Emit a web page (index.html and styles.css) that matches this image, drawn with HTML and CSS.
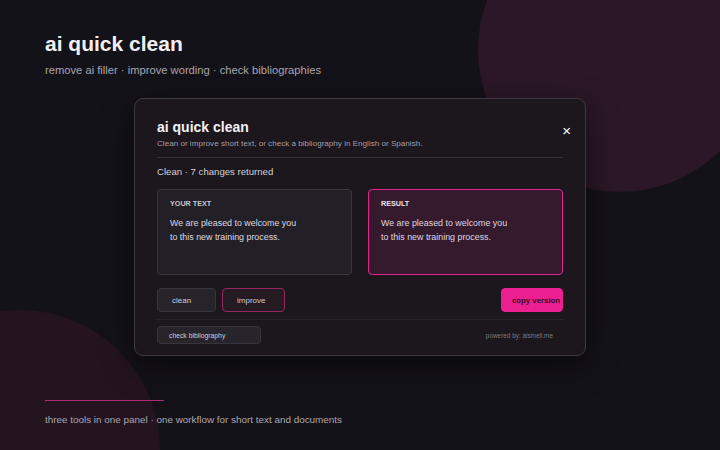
FILE: index.html
```html
<!DOCTYPE html>
<html lang="en">
    <head>
        <meta charset="UTF-8">
        <meta name="viewport" content="width=device-width, initial-scale=1.0">
        <title>ai quick clean</title>
        <link rel="stylesheet" href="styles.css">
    </head>

    <body>

        <!-- Фоновые круги -->

        <div class="backdrop">
            <div class="blob blob-top"></div>
            <div class="blob blob-bottom"></div>
        </div>

        <!-- Заголовок -->

        <header class="hero">
            <h1>ai quick clean</h1>
            <p>remove ai filler · improve wording · check bibliographies</p>
        </header>

        <!-- Панель -->

        <main class="panel">
            <div class="panel-head">
                <div>
                    <h2>ai quick clean</h2>
                    <p class="panel-sub">Clean or improve short text, or check a bibliography in English or Spanish.</p>
                </div>
                <span class="close">&times;</span>
            </div>

            <div class="status">Clean · 7 changes returned</div>

            <div class="boxes">
                <div class="box">
                    <span class="box-label">YOUR TEXT</span>
                    <p>We are pleased to welcome you<br>to this new training process.</p>
                </div>
                <div class="box box-result">
                    <span class="box-label">RESULT</span>
                    <p>We are pleased to welcome you<br>to this new training process.</p>
                </div>
            </div>

            <div class="actions">
                <button class="btn">clean</button>
                <button class="btn btn-active">improve</button>
                <button class="btn btn-copy">copy version</button>
            </div>

            <div class="panel-foot">
                <button class="btn btn-bib">check bibliography</button>
                <span class="powered">powered by: aismell.me</span>
            </div>
        </main>

        <!-- Подвал -->

        <footer class="foot">
            <div class="foot-line"></div>
            <p>three tools in one panel · one workflow for short text and documents</p>
        </footer>

    </body>
</html>
```

FILE: styles.css
```css
/* Общие */

html {
    overflow: hidden;
}

body {
    font-family: "Liberation Sans", Arial, sans-serif;
    margin: 0;
    width: 720px;
    height: 450px;
    overflow: hidden;
    position: relative;
    background: #141219;
    color: #f2f0f4;
}

.backdrop {
    position: absolute;
    top: 0;
    left: 0;
    right: 0;
    bottom: 0;
    overflow: hidden;
}

.blob {
    position: absolute;
    border-radius: 50%;
    background: #2b1727;
}

.blob-top {
    top: -92px;
    left: 478px;
    width: 284px;
    height: 284px;
}

.blob-bottom {
    top: 310px;
    left: -120px;
    width: 280px;
    height: 280px;
    background: #231420;
}

/* Заголовок */

.hero {
    position: relative;
    padding: 32px 45px 0;
}

.hero h1 {
    margin: 0;
    font-size: 21px;
    line-height: 24px;
    font-weight: bold;
}

.hero p {
    margin: 8px 0 0;
    font-size: 11.2px;
    color: #a9a5ae;
}

/* Панель */

.panel {
    position: relative;
    width: 406px;
    margin: 22px auto 0;
    padding: 19px 22px 11px;
    background: #1b171d;
    border: 1px solid #3d3842;
    border-radius: 9px;
    box-shadow: 0 10px 30px rgba(0, 0, 0, 0.5);
}

.panel-head {
    display: flex;
    justify-content: space-between;
    align-items: flex-start;
    padding-bottom: 9px;
    border-bottom: 1px solid #35303a;
}

.panel-head h2 {
    margin: 0;
    font-size: 14px;
    line-height: 18px;
}

.panel-sub {
    margin: 3px 0 0;
    font-size: 8.1px;
    color: #a29ea8;
}

.close {
    font-size: 15px;
    line-height: 15px;
    margin: 5px -8px 0 0;
    color: #ffffff;
}

.status {
    margin-top: 8px;
    font-size: 9.6px;
    color: #d3d0d6;
}

.boxes {
    display: grid;
    grid-template-columns: 1fr 1fr;
    gap: 16px;
    margin-top: 12px;
}

.box {
    height: 86px;
    padding: 9px 12px;
    background: #222026;
    border: 1px solid #3a363f;
    border-radius: 4px;
    box-sizing: border-box;
}

.box-result {
    background: #35192d;
    border-color: #e2238f;
}

.box-label {
    display: block;
    font-size: 7.2px;
    font-weight: bold;
    color: #c9c5cc;
}

.box-result .box-label {
    color: #eee6ee;
}

.box p {
    margin: 8px 0 0;
    font-size: 8.9px;
    line-height: 14px;
    color: #ddd8e0;
}

/* Кнопки */

.actions {
    display: flex;
    gap: 6px;
    margin-top: 13px;
    padding-bottom: 7px;
    border-bottom: 1px solid #28242c;
}

.btn {
    font-family: inherit;
    height: 24px;
    padding: 0 14px;
    background: #27242b;
    border: 1px solid #38343d;
    border-radius: 4px;
    color: #cfcbd3;
    font-size: 8px;
    text-align: left;
}

.actions .btn {
    width: 59px;
}

.actions .btn-active {
    width: 63px;
    background: #231a22;
    border-color: #96275e;
}

.actions .btn-copy {
    width: 62px;
    margin-left: auto;
    padding: 0 0 0 10px;
    background: #ec1f90;
    border-color: #ec1f90;
    color: #3c0a25;
    font-size: 7.8px;
    font-weight: bold;
    white-space: nowrap;
    overflow: hidden;
}

.panel-foot {
    display: flex;
    align-items: center;
    justify-content: space-between;
    margin-top: 6px;
}

.btn-bib {
    width: 104px;
    height: 18px;
    padding-left: 11px;
    font-size: 6.8px;
}

.powered {
    margin-right: 10px;
    font-size: 6.4px;
    color: #7d7983;
}

/* Подвал */

.foot {
    position: absolute;
    left: 45px;
    top: 400px;
}

.foot-line {
    width: 119px;
    height: 1px;
    background: #b02a77;
}

.foot p {
    margin: 13px 0 0;
    font-size: 9.9px;
    color: #aaa6ae;
}
```
